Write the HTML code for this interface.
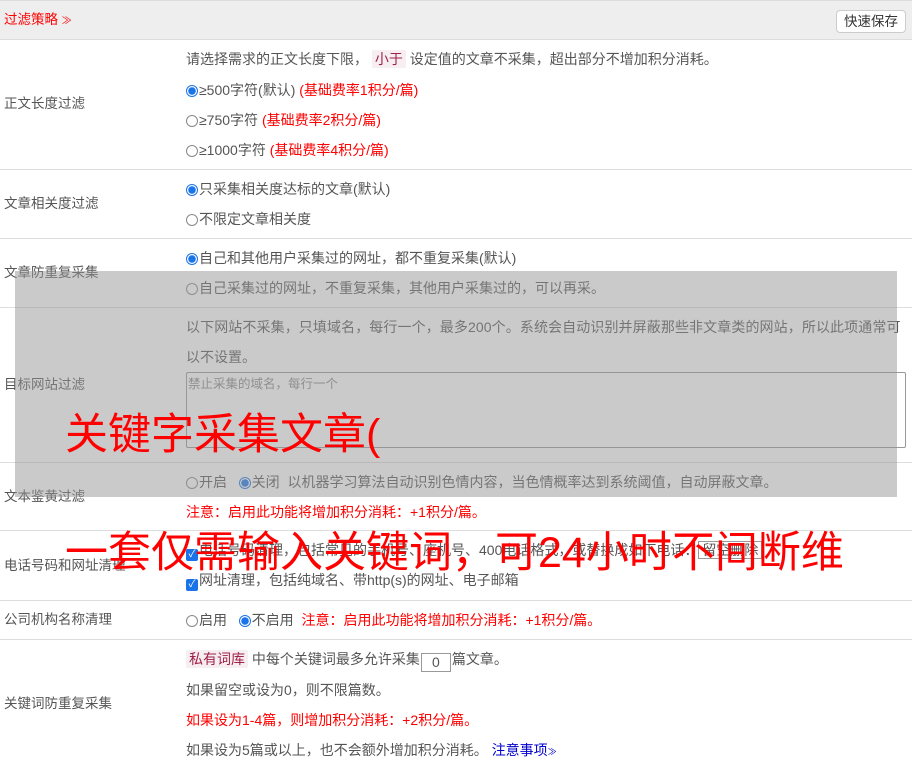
<!DOCTYPE html>
<html><head><meta charset="utf-8"><style>
*{margin:0;padding:0;box-sizing:border-box}
body{width:912px;height:768px;overflow:hidden;background:#fff;font-family:"Liberation Sans","Noto Sans CJK SC",sans-serif;font-size:13.5px;color:#555;position:relative}
.a{position:absolute;white-space:nowrap;line-height:16px}
.c{font-size:14px}
.hr{position:absolute;left:0;width:912px;height:1px;background:#ddd}
.r{color:#f00}
.rad{display:inline-block;width:12px;height:12px;border:1px solid #888;border-radius:50%;vertical-align:-2px;margin-right:1px;background:#fff}
.rad.on{border-color:#1a73e8;background:radial-gradient(circle,#1a73e8 0 3.5px,#fff 4px)}
.cb{display:inline-block;width:12px;height:12px;background:#1a73e8;border-radius:2px;vertical-align:-2px;color:#fff;font-size:10px;line-height:12px;text-align:center;margin-right:1px}
.tag{background:#f6eef0;color:#a0204a;padding:1px 3px;border-radius:2px}
.big{position:absolute;color:#f00;font-size:42px;line-height:48px;white-space:nowrap;font-family:"Liberation Sans","Noto Sans CJK SC",sans-serif}
</style></head><body>
<div style="position:absolute;left:0;top:0;width:912px;height:40px;background:#eee;border-top:1px solid #ddd;border-bottom:1px solid #ddd"></div>
<div class="a r" style="left:4px;top:12px">过滤策略 <span style="font-size:10px">≫</span></div>
<div class="a" style="left:836px;top:10px;width:70px;height:23px;border:1px solid #ccc;border-radius:4px;background:#fff;color:#333;text-align:center;line-height:21px">快速保存</div>

<div class="a" style="left:4px;top:96px">正文长度过滤</div>
<div class="a c" style="left:186px;top:51px">请选择需求的正文长度下限， <span class="tag">小于</span> 设定值的文章不采集，超出部分不增加积分消耗。</div>
<div class="a c" style="left:186px;top:82px"><span class="rad on"></span>≥500字符(默认) <span class="r">(基础费率1积分/篇)</span></div>
<div class="a c" style="left:186px;top:112px"><span class="rad"></span>≥750字符 <span class="r">(基础费率2积分/篇)</span></div>
<div class="a c" style="left:186px;top:142px"><span class="rad"></span>≥1000字符 <span class="r">(基础费率4积分/篇)</span></div>
<div class="hr" style="top:169px"></div>

<div class="a" style="left:4px;top:196px">文章相关度过滤</div>
<div class="a c" style="left:186px;top:181px"><span class="rad on"></span>只采集相关度达标的文章(默认)</div>
<div class="a c" style="left:186px;top:211px"><span class="rad"></span>不限定文章相关度</div>
<div class="hr" style="top:238px"></div>

<div class="a" style="left:4px;top:265px">文章防重复采集</div>
<div class="a c" style="left:186px;top:250px"><span class="rad on"></span>自己和其他用户采集过的网址，都不重复采集(默认)</div>
<div class="a c" style="left:186px;top:280px"><span class="rad"></span>自己采集过的网址，不重复采集，其他用户采集过的，可以再采。</div>
<div class="hr" style="top:307px"></div>

<div class="a" style="left:4px;top:377px">目标网站过滤</div>
<div class="a c" style="left:186px;top:319px;letter-spacing:0.1px">以下网站不采集，只填域名，每行一个，最多200个。系统会自动识别并屏蔽那些非文章类的网站，所以此项通常可</div>
<div class="a c" style="left:186px;top:349px">以不设置。</div>
<div style="position:absolute;left:186px;top:372px;width:720px;height:76px;border:1px solid #999;border-radius:2px"></div>
<div class="a" style="left:188px;top:376px;color:#888;font-size:12.5px">禁止采集的域名，每行一个</div>
<div class="hr" style="top:462px"></div>

<div class="a" style="left:4px;top:489px">文本鉴黄过滤</div>
<div class="a c" style="left:186px;top:474px"><span class="rad"></span>开启 &nbsp; <span class="rad on"></span>关闭 &nbsp;以机器学习算法自动识别色情内容，当色情概率达到系统阈值，自动屏蔽文章。</div>
<div class="a r c" style="left:186px;top:504px">注意：启用此功能将增加积分消耗：+1积分/篇。</div>
<div class="hr" style="top:530px"></div>

<div class="a" style="left:4px;top:558px">电话号码和网址清理</div>
<div class="a c" style="left:186px;top:542px"><span class="cb">✓</span>电话号码清理，包括常见的手机号、座机号、400电话格式，或替换成如下电话：<span style="border:1px solid #999;padding:0 3px">留空删除</span></div>
<div class="a c" style="left:186px;top:572px"><span class="cb">✓</span>网址清理，包括纯域名、带http(s)的网址、电子邮箱</div>
<div class="hr" style="top:600px"></div>

<div class="a" style="left:4px;top:612px">公司机构名称清理</div>
<div class="a c" style="left:186px;top:612px"><span class="rad"></span>启用 &nbsp; <span class="rad on"></span>不启用 &nbsp;<span class="r">注意：启用此功能将增加积分消耗：+1积分/篇。</span></div>
<div class="hr" style="top:639px"></div>

<div class="a" style="left:4px;top:696px">关键词防重复采集</div>
<div class="a c" style="left:186px;top:651px"><span class="tag">私有词库</span> 中每个关键词最多允许采集<span style="display:inline-block;width:30px;height:19px;border:1px solid #999;text-align:center;vertical-align:-3px;margin:0 1px">0</span>篇文章。</div>
<div class="a c" style="left:186px;top:682px">如果留空或设为0，则不限篇数。</div>
<div class="a r c" style="left:186px;top:712px">如果设为1-4篇，则增加积分消耗：+2积分/篇。</div>
<div class="a c" style="left:186px;top:742px">如果设为5篇或以上，也不会额外增加积分消耗。 <span style="color:#00c">注意事项<span style="font-size:9px">≫</span></span></div>

<div style="position:absolute;left:15px;top:271px;width:882px;height:226px;background:rgba(150,150,150,0.5)"></div>
<div class="big" style="left:65px;top:411px;font-size:43px">关键字采集文章(</div>
<div class="big" style="left:65px;top:529px;font-size:43px">一套仅需输入关键词，可24小时不间断维</div>
</body></html>
